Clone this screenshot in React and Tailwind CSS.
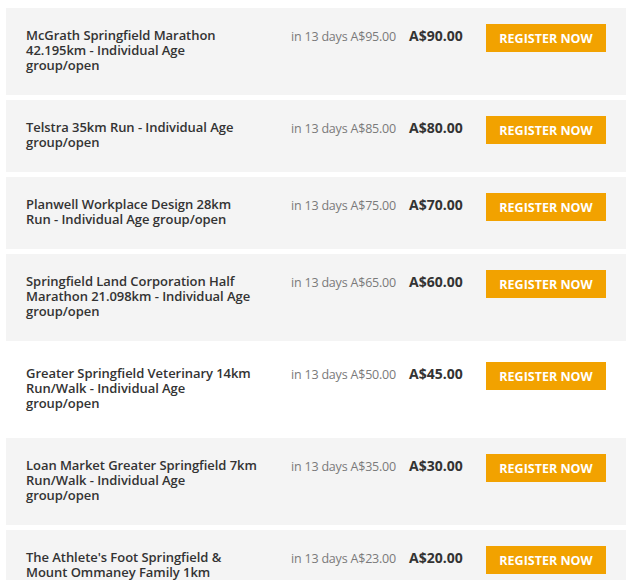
import React from "react";

const rows = [
  { lines: ["McGrath Springfield Marathon", "42.195km - Individual Age", "group/open"], old: "A$95.00", price: "A$90.00" },
  { lines: ["Telstra 35km Run - Individual Age", "group/open"], old: "A$85.00", price: "A$80.00" },
  { lines: ["Planwell Workplace Design 28km", "Run - Individual Age group/open"], old: "A$75.00", price: "A$70.00" },
  { lines: ["Springfield Land Corporation Half", "Marathon 21.098km - Individual Age", "group/open"], old: "A$65.00", price: "A$60.00" },
  { lines: ["Greater Springfield Veterinary 14km", "Run/Walk - Individual Age", "group/open"], old: "A$50.00", price: "A$45.00", white: true },
  { lines: ["Loan Market Greater Springfield 7km", "Run/Walk - Individual Age", "group/open"], old: "A$35.00", price: "A$30.00" },
  { lines: ["The Athlete's Foot Springfield &", "Mount Ommaney Family 1km"], old: "A$23.00", price: "A$20.00" },
];

export default function App() {
  return (
    <div
      className="w-[630px] h-[580px] overflow-hidden bg-white pt-2 pl-[6px] pr-[4px] flex flex-col gap-[5px]"
      style={{ fontFamily: "'Open Sans', 'Liberation Sans', sans-serif" }}
    >
      {rows.map((r, i) => (
        <div
          key={i}
          className={`shrink-0 flex items-start pt-4 pb-[22px] px-5 ${r.white ? "bg-white" : "bg-[#f4f4f4]"}`}
        >
          <div className="w-[245px] shrink-0 pt-1 text-[13px] leading-[15px] font-semibold text-[#333] whitespace-nowrap tracking-[-0.05px]">
            {r.lines.map((l, j) => (
              <React.Fragment key={j}>
                {j > 0 && <br />}
                {l}
              </React.Fragment>
            ))}
          </div>
          <div className="ml-5 w-[118px] shrink-0 pt-[5px] text-[12.5px] leading-[15px] text-[#7a7a7a] whitespace-nowrap tracking-[-0.2px]">
            in 13 days {r.old}
          </div>
          <div className="pt-1 text-[14px] leading-[15px] font-bold text-[#333] whitespace-nowrap">
            {r.price}
          </div>
          <button className="ml-auto w-[120px] h-[28px] bg-[#f2a200] text-white text-[12.5px] font-bold uppercase flex items-center justify-center pt-[3px]">
            Register Now
          </button>
        </div>
      ))}
    </div>
  );
}
